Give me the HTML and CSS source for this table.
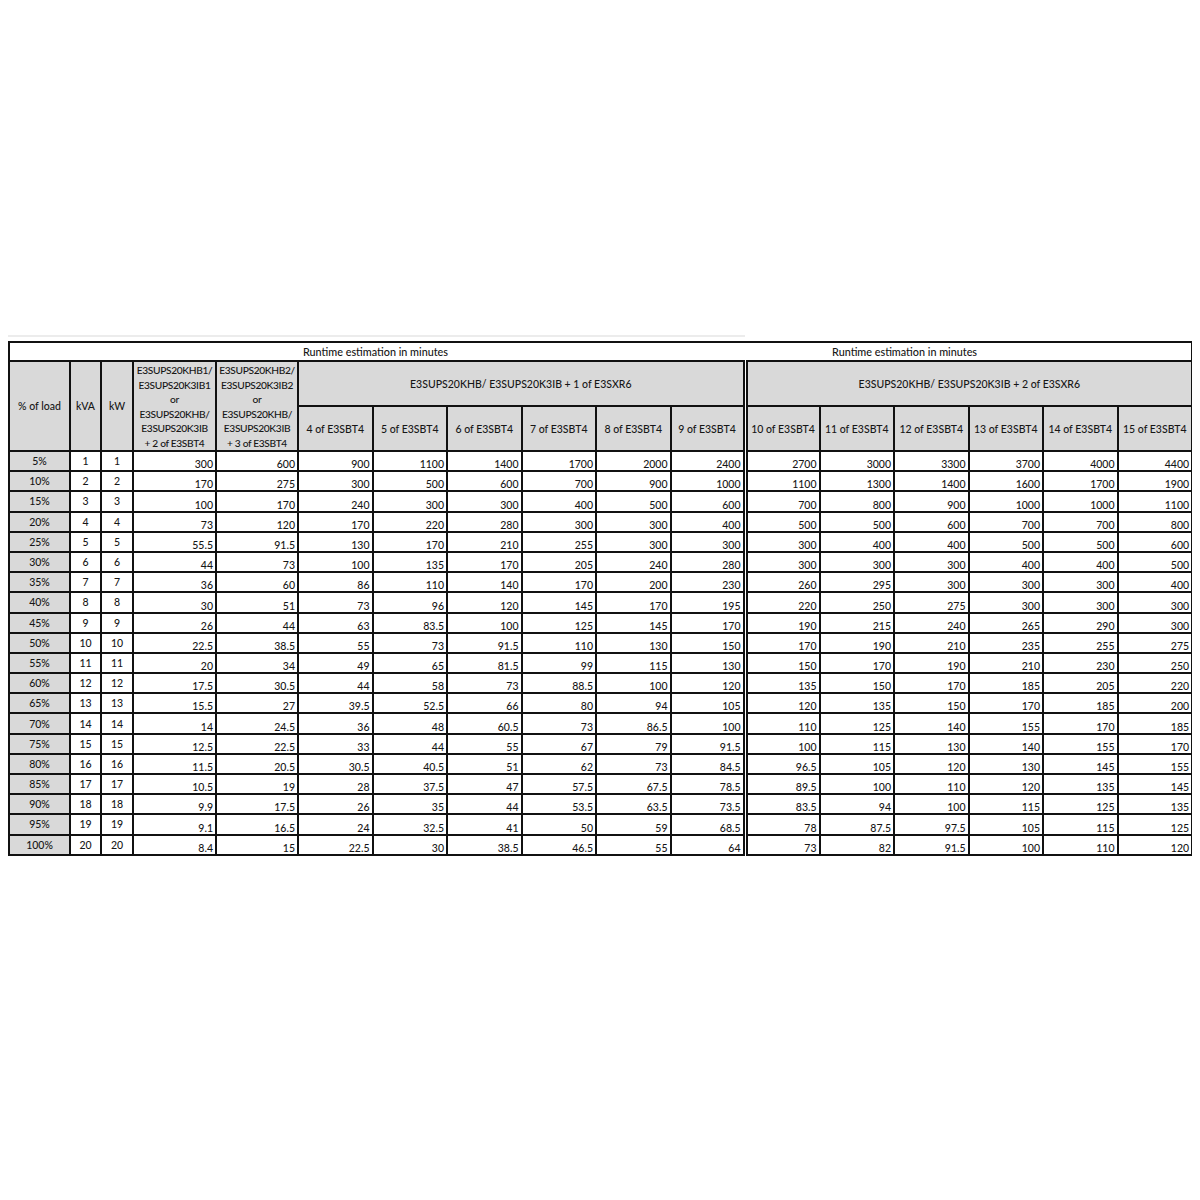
FILE: index.html
```html
<!DOCTYPE html>
<html>
<head>
<meta charset="utf-8">
<link rel="stylesheet" href="styles.css">
</head>
<body>
<div class="page">
<div class="rule"></div>
<table class="runtime">
<colgroup>
<col class="c-load"><col class="c-kva"><col class="c-kw"><col class="c-a"><col class="c-b">
<col class="c-n"><col class="c-n"><col class="c-n"><col class="c-n"><col class="c-n"><col class="c-n">
<col class="c-n"><col class="c-n"><col class="c-n"><col class="c-n"><col class="c-n"><col class="c-n">
</colgroup>
<tbody>
<tr class="r-title">
<td colspan="5" class="t-blank"></td>
<td colspan="6" class="t-left">Runtime estimation in minutes</td>
<td colspan="6" class="t-right">Runtime estimation in minutes</td>
</tr>
<tr class="r-h1">
<td rowspan="2" class="h">% of load</td>
<td rowspan="2" class="h">kVA</td>
<td rowspan="2" class="h">kW</td>
<td rowspan="2" class="h hm"><div class="multi">E3SUPS20KHB1/<br>E3SUPS20K3IB1<br>or<br>E3SUPS20KHB/<br>E3SUPS20K3IB<br>+ 2 of E3SBT4</div></td>
<td rowspan="2" class="h hm"><div class="multi">E3SUPS20KHB2/<br>E3SUPS20K3IB2<br>or<br>E3SUPS20KHB/<br>E3SUPS20K3IB<br>+ 3 of E3SBT4</div></td>
<td colspan="6" class="h hg sep">E3SUPS20KHB/ E3SUPS20K3IB + 1 of E3SXR6</td>
<td colspan="6" class="h hg">E3SUPS20KHB/ E3SUPS20K3IB + 2 of E3SXR6</td>
</tr>
<tr class="r-h2">
<td class="h">4 of E3SBT4</td><td class="h">5 of E3SBT4</td><td class="h">6 of E3SBT4</td><td class="h">7 of E3SBT4</td><td class="h">8 of E3SBT4</td><td class="h sep">9 of E3SBT4</td>
<td class="h">10 of E3SBT4</td><td class="h">11 of E3SBT4</td><td class="h">12 of E3SBT4</td><td class="h">13 of E3SBT4</td><td class="h">14 of E3SBT4</td><td class="h">15 of E3SBT4</td>
</tr>
</tbody>
<tbody id="data"></tbody>
</table>
</div>
<script src="app.js"></script>
</body>
</html>
```
FILE: app.js
```js
const rows = [
["5%",1,1,300,600,900,1100,1400,1700,2000,2400,2700,3000,3300,3700,4000,4400],
["10%",2,2,170,275,300,500,600,700,900,1000,1100,1300,1400,1600,1700,1900],
["15%",3,3,100,170,240,300,300,400,500,600,700,800,900,1000,1000,1100],
["20%",4,4,73,120,170,220,280,300,300,400,500,500,600,700,700,800],
["25%",5,5,55.5,91.5,130,170,210,255,300,300,300,400,400,500,500,600],
["30%",6,6,44,73,100,135,170,205,240,280,300,300,300,400,400,500],
["35%",7,7,36,60,86,110,140,170,200,230,260,295,300,300,300,400],
["40%",8,8,30,51,73,96,120,145,170,195,220,250,275,300,300,300],
["45%",9,9,26,44,63,83.5,100,125,145,170,190,215,240,265,290,300],
["50%",10,10,22.5,38.5,55,73,91.5,110,130,150,170,190,210,235,255,275],
["55%",11,11,20,34,49,65,81.5,99,115,130,150,170,190,210,230,250],
["60%",12,12,17.5,30.5,44,58,73,88.5,100,120,135,150,170,185,205,220],
["65%",13,13,15.5,27,39.5,52.5,66,80,94,105,120,135,150,170,185,200],
["70%",14,14,14,24.5,36,48,60.5,73,86.5,100,110,125,140,155,170,185],
["75%",15,15,12.5,22.5,33,44,55,67,79,91.5,100,115,130,140,155,170],
["80%",16,16,11.5,20.5,30.5,40.5,51,62,73,84.5,96.5,105,120,130,145,155],
["85%",17,17,10.5,19,28,37.5,47,57.5,67.5,78.5,89.5,100,110,120,135,145],
["90%",18,18,9.9,17.5,26,35,44,53.5,63.5,73.5,83.5,94,100,115,125,135],
["95%",19,19,9.1,16.5,24,32.5,41,50,59,68.5,78,87.5,97.5,105,115,125],
["100%",20,20,8.4,15,22.5,30,38.5,46.5,55,64,73,82,91.5,100,110,120]
];
const body = document.getElementById("data");
rows.forEach(r => {
  const tr = document.createElement("tr");
  tr.className = "r-data";
  r.forEach((v, i) => {
    const td = document.createElement("td");
    td.textContent = v;
    if (i === 0) td.className = "load";
    else if (i < 3) td.className = "kv";
    else td.className = i === 10 ? "num sep" : "num";
    tr.appendChild(td);
  });
  body.appendChild(tr);
});
```
FILE: styles.css
```css
body {
  margin: 8px;
  background: #fff;
  color: #161616;
  font-family: Lato, "Open Sans", Arial, sans-serif;
  font-size: 10.5px;
  font-weight: 500;
}
.page {
  padding-top: 327px;
}
.rule {
  width: 737px;
  height: 2px;
  background: #ececec;
  margin-bottom: 4px;
}
.runtime {
  border-collapse: collapse;
  table-layout: fixed;
  width: 1184px;
}
.c-load { width: 61px; }
.c-kva { width: 31px; }
.c-kw { width: 32px; }
.c-a { width: 83px; }
.c-b { width: 82px; }
.c-n { width: 74.5px; }
.runtime td {
  border: 2px solid #111;
  padding: 0 2px;
  white-space: nowrap;
  overflow: hidden;
  line-height: 12px;
}
.r-title td {
  height: 17px;
  vertical-align: middle;
  font-size: 10.8px;
}
.runtime td.t-blank { border-right: hidden; }
.runtime td.t-left {
  border-left: hidden;
  border-right: hidden;
  text-align: left;
  padding-left: 5px;
}
.runtime td.t-right {
  text-align: left;
  padding-left: 87px;
}
.h {
  background: #d9d9d9;
  text-align: center;
  vertical-align: middle;
}
.r-h1 td { height: 43px; }
.r-h2 td { height: 43px; }
.hg { padding-top: 6px; }
.runtime td.hm {
  vertical-align: top;
  padding: 0;
}
.multi {
  height: 88px;
  overflow: hidden;
  padding-top: 1px;
  box-sizing: border-box;
  line-height: 14.6px;
  font-size: 10.2px;
  letter-spacing: -0.35px;
}
.runtime td.sep { border-right: 5px double #111; }
.r-data td { height: 18.2px; }
.load {
  background: #d9d9d9;
  text-align: center;
  vertical-align: middle;
  padding-bottom: 2px;
}
.kv {
  text-align: center;
  vertical-align: middle;
}
.num {
  text-align: right;
  vertical-align: bottom;
  padding-bottom: 1px;
}
```
